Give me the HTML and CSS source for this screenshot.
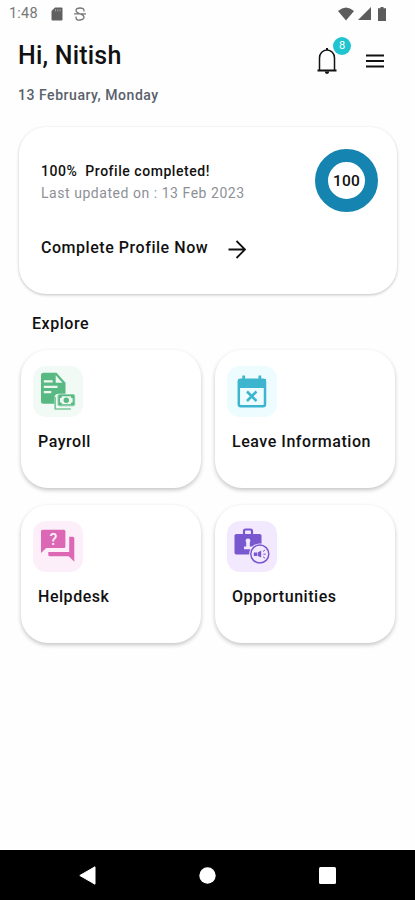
FILE: index.html
```html
<!DOCTYPE html>
<html lang="en">
<head>
  <meta charset="UTF-8" />
  <meta name="viewport" content="width=device-width, initial-scale=1" />
  <title>Home</title>
  <link rel="stylesheet" href="styles.css">
</head>
<body>
  <div class="status-bar">
    <span class="clock">1:48</span>
    <svg class="sd-icon" width="12" height="14" viewBox="0 0 12 14"><path d="M4 .5h6.5a1 1 0 0 1 1 1v11a1 1 0 0 1-1 1h-9a1 1 0 0 1-1-1V4z" fill="#606060"/><path d="M4.500 2v2.500M6.700 2v2.500M9 2v2.500" stroke="#999" stroke-width="1"/></svg>
    <svg class="s-icon" width="12" height="14" viewBox="0 0 12 14" fill="none" stroke="#777" stroke-width="1.300"><path d="M10 4.500V3.500Q10 1 6 1T2 3.600Q2 5.500 5.500 6.500M0 6.800h12M6.500 7.200Q10 8 10 10.200T6 13 2 10.500V9.500"/></svg>
    <div class="signals">
      <svg width="16" height="14" viewBox="0 0 16 14"><path d="M0 4Q8-3 16 4L8 13.500z" fill="#5c5c5c"/></svg>
      <svg width="13" height="13" viewBox="0 0 13 13"><path d="M13 0v13H0z" fill="#5c5c5c"/></svg>
      <svg width="8" height="14" viewBox="0 0 8 14"><path d="M2.500 0h3v1.200H8V14H0V1.200h2.500z" fill="#5c5c5c"/></svg>
    </div>
  </div>

  <header class="header">
    <div>
      <h1>Hi, Nitish</h1>
      <p class="date">13 February, Monday</p>
    </div>
    <div class="actions">
      <div class="bell">
        <svg width="20" height="27" viewBox="0 0 20 27"><path d="M2.500 22.500V10a7.500 8 0 0 1 15 0v12.500" fill="none" stroke="#111" stroke-width="1.500"/><path d="M.5 22.500h19" stroke="#111" stroke-width="2"/><path d="M10 0v2" stroke="#111" stroke-width="2"/><path d="M7.800 23.500h4.400a2.200 2.500 0 0 1-4.400 0z" fill="#111"/></svg>
        <span class="badge">8</span>
      </div>
      <svg class="menu" width="18" height="14" viewBox="0 0 18 14"><path d="M0 1.500h18M0 7h18M0 12.500h18" stroke="#111" stroke-width="2"/></svg>
    </div>
  </header>

  <section class="profile-card">
    <div>
      <p class="completed"><span>100%</span>Profile completed!</p>
      <p class="updated">Last updated on : 13 Feb 2023</p>
      <div class="complete-link">
        <span>Complete Profile Now</span>
        <svg width="18" height="19" viewBox="0 0 18 19"><path d="M.5 9.500h16M8.500 1l8.500 8.500L8.500 18" fill="none" stroke="#111" stroke-width="1.800"/></svg>
      </div>
    </div>
    <div class="progress">100</div>
  </section>

  <h2>Explore</h2>
  <main class="grid">
    <div class="tile">
      <svg class="icon green" viewBox="0 0 50 51">
        <path d="M10.500 6.700h13l9 10v11H26q-4.500 0-4.500 4v6h-11Q8 37.700 8 35.200v-26q0-2.500 2.500-2.500z" fill="#58b982"/>
        <path d="M22.700 9.300v7.400h6.800zM10.800 14.300h8.900v2.300h-8.900zM10.800 19.800h13.700v2.300H10.800zM10.800 25h7.500v2.300h-7.500z" fill="#eef8f1"/>
        <path d="M22.200 31v12h15.600" fill="none" stroke="#79c79b" stroke-width="1.700"/>
        <rect x="25" y="28.500" width="16.700" height="11.300" rx="1.500" fill="#58b982" stroke="#8bd0a8"/>
        <path d="M29 30.300h8.700a2 2 0 0 0 2 2v4a2 2 0 0 0-2 2H29a2 2 0 0 0-2-2v-4a2 2 0 0 0 2-2z" fill="#eef8f1"/>
        <circle cx="33.300" cy="34.200" r="2.700" fill="#58b982"/>
      </svg>
      <span>Payroll</span>
    </div>
    <div class="tile">
      <svg class="icon cyan" viewBox="0 0 50 51">
        <rect x="11.800" y="13.700" width="26.200" height="26.500" rx="2" fill="none" stroke="#3db5cf" stroke-width="2.500"/>
        <path d="M11 13h28v9H11zM15.300 9.500H18V14h-2.700zM31.500 9.500h2.700V14h-2.700z" fill="#3db5cf"/>
        <path d="M20 25.500l9.500 9.500M29.500 25.500L20 35" stroke="#3db5cf" stroke-width="2.600"/>
      </svg>
      <span>Leave Information</span>
    </div>
    <div class="tile">
      <svg class="icon pink" viewBox="0 0 50 51">
        <path d="M9.500 8.700h21.400q1.500 0 1.500 1.500v15.200q0 1.500-1.500 1.500H13.200L8 32V10.200q0-1.500 1.500-1.500z" fill="#dc68b5"/>
        <path d="M36.200 15.700h3.600q1.500 0 1.500 1.500v23.600l-5.600-5.600H16.800q-1.500 0-1.500-1.500V31h20.900z" fill="#dc68b5"/>
        <text x="20.300" y="23.800" text-anchor="middle" class="mark">?</text>
      </svg>
      <span>Helpdesk</span>
    </div>
    <div class="tile">
      <svg class="icon violet" viewBox="0 0 50 51">
        <path d="M17 14V10q0-1.500 1.500-1.500h5q1.500 0 1.500 1.500v4" fill="none" stroke="#7958cf" stroke-width="2.200"/>
        <rect x="7.500" y="13" width="27" height="20.500" rx="1.800" fill="#7958cf"/>
        <circle cx="21" cy="20" r="2.400" fill="#f3e9ff"/>
        <path d="M19.200 21.500h3.600v4h4V28.300H17v-2.800h2.200z" fill="#f3e9ff"/>
        <circle cx="32.800" cy="33" r="10.600" fill="#f3e9ff"/>
        <circle cx="32.800" cy="33" r="9" fill="none" stroke="#7958cf" stroke-width="1.500"/>
        <path d="M26.800 31.500h3.400v3.500h-3.400zM30.800 31.500l3.400-2v7l-3.400-1.500z" fill="#7958cf"/>
        <path d="M36 30.500l2-1.500M36.300 33.200h2.500M36 35.700l2 1.500" stroke="#7958cf"/>
      </svg>
      <span>Opportunities</span>
    </div>
  </main>

  <nav class="nav-bar">
    <svg width="17" height="19" viewBox="0 0 17 19"><path d="M16 .8v17.400L.8 9.500z" fill="#fff" stroke="#fff" stroke-linejoin="round"/></svg>
    <svg width="17" height="17" viewBox="0 0 17 17"><circle cx="8.500" cy="8.500" r="8.200" fill="#fff"/></svg>
    <svg width="17" height="17" viewBox="0 0 17 17"><rect width="17" height="17" rx="1.500" fill="#fff"/></svg>
  </nav>
</body>
</html>
```
FILE: styles.css
```css
* {
  box-sizing: border-box;
}
body {
  margin: 0;
  height: 900px;
  display: flex;
  flex-direction: column;
  font-family: Roboto, sans-serif;
  letter-spacing: 0.54px;
  background: #fefefe;
  color: #111;
}
h1, h2, p {
  margin: 0;
}
svg {
  display: block;
  flex-shrink: 0;
}
.status-bar {
  height: 27px;
  padding: 0 29px 0 9px;
  display: flex;
  align-items: center;
  color: #777;
  font-size: 14.5px;
  letter-spacing: 0.2px;
}
.clock {
  width: 42px;
}
.s-icon {
  margin-left: 11px;
}
.signals {
  margin-left: auto;
  display: flex;
  align-items: center;
  gap: 4px;
}
.signals svg:last-child {
  margin-left: 3px;
}
.header {
  height: 100px;
  padding: 13px 31px 0 18px;
  display: flex;
  justify-content: space-between;
}
h1 {
  font-size: 25px;
  line-height: 32px;
  font-weight: 500;
  letter-spacing: 0.2px;
}
.date {
  margin-top: 14px;
  font-size: 14px;
  line-height: 18px;
  font-weight: 500;
  color: #59606b;
}
.actions {
  display: flex;
  align-items: flex-start;
  gap: 29px;
  padding-top: 8px;
}
.bell {
  position: relative;
}
.badge {
  position: absolute;
  left: 16px;
  top: -11px;
  width: 18px;
  height: 18px;
  border-radius: 50%;
  background: #20c4cf;
  color: #fff;
  font-size: 11px;
  line-height: 18px;
  letter-spacing: 0;
  text-align: center;
}
.menu {
  margin-top: 6px;
}
.profile-card {
  height: 167px;
  margin: 0 18px 0 19px;
  padding: 22px 19px 0 22px;
  display: flex;
  justify-content: space-between;
  border-radius: 27px;
  background: #fff;
  box-shadow: 0 1px 3px rgba(0, 0, 0, 0.25);
}
.completed {
  margin-top: 12px;
  font-size: 14px;
  line-height: 21px;
  font-weight: 500;
}
.completed span {
  margin-right: 8px;
}
.updated {
  font-size: 14px;
  line-height: 22px;
  color: #8d9196;
}
.complete-link {
  margin-top: 32px;
  display: flex;
  gap: 20px;
  font-size: 16px;
  line-height: 24px;
  font-weight: 500;
}
.complete-link svg {
  margin-top: 4px;
}
.progress {
  width: 63px;
  height: 63px;
  border: 13px solid #1684b0;
  border-radius: 50%;
  display: flex;
  align-items: center;
  justify-content: center;
  font-size: 15.5px;
  letter-spacing: 0.2px;
  font-weight: 500;
}
h2 {
  margin: 18px 0 15px 32px;
  font-size: 16px;
  line-height: 23px;
  font-weight: 500;
}
.grid {
  display: grid;
  grid-template-columns: 180px 180px;
  grid-auto-rows: 138px;
  gap: 17px 14px;
  margin-left: 21px;
}
.tile {
  padding: 16px 0 0 12px;
  border-radius: 27px;
  background: #fff;
  box-shadow: 0 2px 4px rgba(0, 0, 0, 0.23);
}
.tile span {
  display: block;
  margin: 13px 0 0 5px;
  font-size: 16px;
  line-height: 24px;
  font-weight: 500;
  white-space: nowrap;
}
.icon {
  width: 50px;
  height: 51px;
  border-radius: 13px;
}
.green {
  background: #f1faf4;
}
.cyan {
  background: #edfcff;
}
.pink {
  background: #fdeff9;
}
.violet {
  background: #f3e9ff;
}
.mark {
  font-size: 16px;
  font-weight: 500;
  letter-spacing: 0;
  fill: #fdeff9;
}
.nav-bar {
  height: 50px;
  margin-top: auto;
  padding: 0 79px;
  display: flex;
  align-items: center;
  justify-content: space-between;
  background: #000;
}
```
